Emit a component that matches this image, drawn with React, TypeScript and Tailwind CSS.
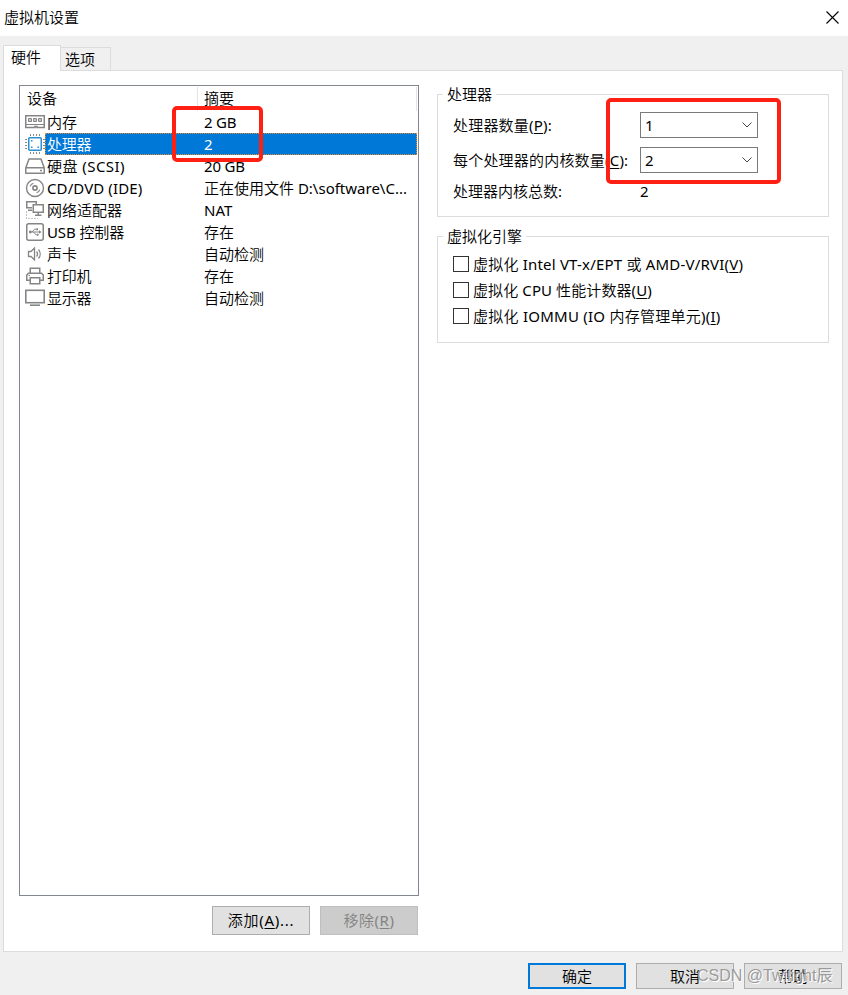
import type { ReactNode } from "react"

interface Device {
  name: string
  summary: string
  icon: ReactNode
  nameSpacing?: string
  summarySpacing?: string
}

function MemoryIcon() {
  return (
    <svg width="20" height="20" viewBox="0 0 20 20" fill="none" stroke="#858585">
      <path d="M0.75 3.75H19.25V15.5H12V14.5H10V15.5H0.75Z" strokeWidth="1.5" />
      <path d="M3.5 6.5H6.5V9.5H3.5ZM8.5 6.5H11.5V9.5H8.5ZM13.5 6.5H16.5V9.5H13.5Z" fill="#c9c9c9" />
      <path d="M1 12.5H19" />
    </svg>
  )
}

function CpuIcon() {
  return (
    <svg width="20" height="20" viewBox="0 0 20 20" fill="none">
      <path d="M5.5 0V2M8.5 0V2M11.5 0V2M14.5 0V2M5.5 18V20M8.5 18V20M11.5 18V20M14.5 18V20M0 5.5H2M0 8.5H2M0 11.5H2M0 14.5H2M18 5.5H20M18 8.5H20M18 11.5H20M18 14.5H20" stroke="#8a8a8a" />
      <rect x="3.75" y="3.75" width="12.5" height="12.5" rx="1" fill="white" stroke="#2b8fd6" strokeWidth="1.5" />
      <path d="M6 6H7.5V7.5H6ZM12.5 12.5H14V14H12.5ZM6 12.5H7.5V14H6Z" fill="#2b8fd6" />
    </svg>
  )
}

function DiskIcon() {
  return (
    <svg width="20" height="20" viewBox="0 0 20 20" fill="none" stroke="#858585" strokeWidth="1.5">
      <path d="M0.75 12L4 3H16L19.25 12M0.75 11.75H19.25V17.25H0.75Z" strokeLinejoin="round" />
      <path d="M15 14.5H17" />
    </svg>
  )
}

function DiscIcon() {
  return (
    <svg width="20" height="20" viewBox="0 0 20 20" fill="none" stroke="#858585">
      <circle cx="10" cy="10" r="8.5" strokeWidth="1.4" />
      <circle cx="10" cy="10" r="2.1" strokeWidth="1.6" />
      <path d="M5.2 8.4A5 5 0 0 1 8.4 5.2M14.8 11.6A5 5 0 0 1 11.6 14.8" strokeWidth="1.2" />
    </svg>
  )
}

function NetworkIcon() {
  return (
    <svg width="20" height="20" viewBox="0 0 20 20" fill="none" stroke="#858585">
      <path d="M7 7.75H1.75V1.75H11.25V4" strokeWidth="1.5" />
      <path d="M3 10.25H7" strokeWidth="1.5" />
      <rect x="8.25" y="4.75" width="10" height="7.5" strokeWidth="1.5" fill="white" />
      <path d="M13.25 12V15M10 15.25H16.5" strokeWidth="1.5" />
      <path d="M1.5 11.5V18.5H13" strokeDasharray="1 2" />
    </svg>
  )
}

function UsbIcon() {
  return (
    <svg width="20" height="20" viewBox="0 0 20 20" fill="none" stroke="#858585">
      <rect x="1.75" y="1.75" width="16.5" height="16.5" rx="2" strokeWidth="1.5" />
      <path d="M4.5 10H15M7 10L9.5 7.2H12M8.5 10L11 12.8H13" />
      <circle cx="5.3" cy="10" r="1.4" fill="#858585" stroke="none" />
      <path d="M14 8.3L16.5 10L14 11.7ZM11.5 6.2H13V8.2H11.5ZM12 11.8H13.5V13.8H12Z" fill="#858585" stroke="none" />
    </svg>
  )
}

function SoundIcon() {
  return (
    <svg width="20" height="20" viewBox="0 0 20 20" fill="none" stroke="#858585" strokeWidth="1.3">
      <path d="M3.5 7.5H6L9.5 4V16L6 12.5H3.5Z" />
      <path d="M11.5 7.5A4 4 0 0 1 11.5 12.5M13.5 5.5A7 7 0 0 1 13.5 14.5" />
    </svg>
  )
}

function PrinterIcon() {
  return (
    <svg width="20" height="20" viewBox="0 0 20 20" fill="none" stroke="#858585" strokeWidth="1.5">
      <path d="M5.25 7V2.25H14.75V7" />
      <path d="M5 14.25H1.75V9L3.5 7.25H16.5L18.25 9V14.25H15" />
      <path d="M5.25 11.75H14.75V17.75H5.25Z" />
      <path d="M3.5 9.5H5" strokeWidth="1" />
    </svg>
  )
}

function DisplayIcon() {
  return (
    <svg width="20" height="20" viewBox="0 0 20 20" fill="none" stroke="#858585" strokeWidth="1.6">
      <rect x="0.8" y="2.3" width="18.4" height="12.4" />
      <path d="M5 17.2H15" />
    </svg>
  )
}

const devices: Device[] = [
  { name: "内存", summary: "2 GB", icon: <MemoryIcon />, summarySpacing: "tracking-[-0.2px]" },
  { name: "处理器", summary: "2", icon: <CpuIcon />, nameSpacing: "tracking-[-0.3px]" },
  { name: "硬盘 (SCSI)", summary: "20 GB", icon: <DiskIcon />, nameSpacing: "tracking-[0.45px]", summarySpacing: "tracking-[-0.2px]" },
  { name: "CD/DVD (IDE)", summary: "正在使用文件 D:\\software\\C...", icon: <DiscIcon />, nameSpacing: "tracking-[0.1px]" },
  { name: "网络适配器", summary: "NAT", icon: <NetworkIcon /> },
  { name: "USB 控制器", summary: "存在", icon: <UsbIcon />, nameSpacing: "tracking-[-0.1px]" },
  { name: "声卡", summary: "自动检测", icon: <SoundIcon /> },
  { name: "打印机", summary: "存在", icon: <PrinterIcon />, nameSpacing: "tracking-[-0.3px]" },
  { name: "显示器", summary: "自动检测", icon: <DisplayIcon />, nameSpacing: "tracking-[-0.3px]" },
]

function Group({ title, className, children }: { title: string; className: string; children: ReactNode }) {
  return (
    <section className={`border border-[#dcdcdc] ${className}`}>
      <h2 className="ml-[5px] -mt-[11px] h-5 w-fit bg-white px-1 leading-5">{title}</h2>
      {children}
    </section>
  )
}

function Combo({ value }: { value: string }) {
  return (
    <button className="flex h-[26px] w-[118px] items-center justify-between border border-[#7a7a7a] bg-white pl-1 pr-[5px]">
      <span className="-mt-px">{value}</span>
      <svg width="10" height="6" viewBox="0 0 10 6" fill="none" stroke="#444">
        <path d="M0.5 0.5L5 5L9.5 0.5" />
      </svg>
    </button>
  )
}

function CheckRow({ spacing, children }: { spacing: string; children: ReactNode }) {
  return (
    <label className="flex h-[26px] items-center gap-1">
      <span className="size-4 shrink-0 border border-[#333] bg-white" />
      <span className={`whitespace-pre ${spacing}`}>{children}</span>
    </label>
  )
}

function Key({ children }: { children: string }) {
  return <span className="underline decoration-1 underline-offset-2">{children}</span>
}

export default function App() {
  const selected = 1

  return (
    <div className="relative flex h-[995px] w-[848px] flex-col overflow-hidden bg-[#f0f0f0] font-['Noto_Sans','Noto_Sans_CJK_SC_DemiLight','Noto_Sans_CJK_SC',sans-serif] text-[15px] leading-5 text-black">
      <header className="flex h-9 shrink-0 items-center justify-between bg-white pb-[2px] pl-1 pr-[9px]">
        <h1>虚拟机设置</h1>
        <svg width="13" height="13" viewBox="0 0 13 13" stroke="black" strokeWidth="1.1">
          <path d="M0.5 0.5L12.5 12.5M12.5 0.5L0.5 12.5" />
        </svg>
      </header>

      <nav className="flex h-[34px] shrink-0 items-end pl-[3px]">
        <button className="z-10 -mb-px h-[26px] w-[58px] border border-b-0 border-[#dcdcdc] bg-white pb-[3px] pr-3">硬件</button>
        <button className="h-[23px] w-[50px] border border-b-0 border-l-0 border-[#dcdcdc] pr-[11px]">选项</button>
      </nav>

      <main className="ml-[3px] flex h-[882px] w-[840px] shrink-0 border border-[#dcdcdc] bg-white pl-[15px] pt-[14px]">
        <div className="w-[400px]">
          <div className="h-[811px] border border-[#828790]">
            <div className="flex h-[25px] pt-px">
              <div className="w-[178px] border-r border-[#e5e5e5] pl-[7px] pt-px">设备</div>
              <div className="w-[219px] border-r border-[#e5e5e5] pl-[6px] pt-px">摘要</div>
            </div>
            {devices.map((device, i) => (
              <div key={device.name} className="flex h-[22px] items-center pl-[5px]">
                <span className="w-5 shrink-0">{device.icon}</span>
                <div
                  className={
                    i === selected
                      ? "flex h-[22px] w-[372px] items-center border border-dotted border-[#f08a28] bg-[#0078d7] pl-px text-white"
                      : "flex h-[22px] w-[372px] items-center pl-[2px]"
                  }
                >
                  <span className={`w-[157px] whitespace-nowrap ${device.nameSpacing ?? ""}`}>{device.name}</span>
                  <span className={`whitespace-nowrap ${device.summarySpacing ?? ""}`}>{device.summary}</span>
                </div>
              </div>
            ))}
          </div>
          <div className="mt-[10px] flex justify-end gap-[10px] pr-px">
            <button className="h-[29px] w-[98px] border border-[#adadad] bg-[#e1e1e1] pb-px tracking-[0.7px]">
              添加(<Key>A</Key>)...
            </button>
            <button className="h-[29px] w-[98px] border border-[#bfbfbf] bg-[#ccc] pb-px tracking-[0.5px] text-[#838383]" disabled>
              移除(<Key>R</Key>)
            </button>
          </div>
        </div>

        <div className="ml-[18px] w-[392px] pt-[9px]">
          <Group title="处理器" className="h-[123px]">
            <div className="mt-2 grid grid-cols-[187px_118px] gap-y-[9px] pl-[15px]">
              <span className="self-center whitespace-nowrap tracking-[0.2px]">
                处理器数量(<Key>P</Key>):
              </span>
              <Combo value="1" />
              <span className="self-center whitespace-nowrap tracking-[0.2px]">
                每个处理器的内核数量(<Key>C</Key>):
              </span>
              <Combo value="2" />
              <span className="-mt-px">处理器内核总数:</span>
              <span className="-mt-px">2</span>
            </div>
          </Group>
          <Group title="虚拟化引擎" className="mt-[19px] h-[107px]">
            <div className="mt-[5px] pl-[15px]">
              <CheckRow spacing="tracking-[0.2px]">
                虚拟化 Intel VT-x/EPT 或 AMD-V/RVI(<Key>V</Key>)
              </CheckRow>
              <CheckRow spacing="tracking-[0.1px]">
                虚拟化 CPU 性能计数器(<Key>U</Key>)
              </CheckRow>
              <CheckRow spacing="tracking-[0.25px]">
                虚拟化 IOMMU (IO 内存管理单元)(<Key>I</Key>)
              </CheckRow>
            </div>
          </Group>
        </div>
      </main>

      <footer className="flex justify-end gap-[10px] pr-[6px] pt-[11px]">
        <button className="h-[26px] w-[98px] border-2 border-[#0078d7] bg-[#e1e1e1]">确定</button>
        <button className="h-[26px] w-[98px] border border-[#adadad] bg-[#e1e1e1]">取消</button>
        <button className="h-[26px] w-[98px] border border-[#adadad] bg-[#e1e1e1]">帮助</button>
      </footer>

      {/* red highlight marks */}
      <div className="absolute left-[172px] top-[106px] h-[56px] w-[91px] rounded-[5px] border-4 border-[#ff2014]" />
      <div className="absolute left-[606px] top-[98px] h-[86px] w-[175px] rounded-[5px] border-4 border-[#ff2014]" />

      <div className="absolute left-[697px] top-[966px] whitespace-nowrap font-['Liberation_Sans','Noto_Sans_CJK_SC',sans-serif] text-[16px] text-[#909090]/90 [text-shadow:1px_1px_0_#fff]">
        CSDN @Twilight辰
      </div>
    </div>
  )
}
